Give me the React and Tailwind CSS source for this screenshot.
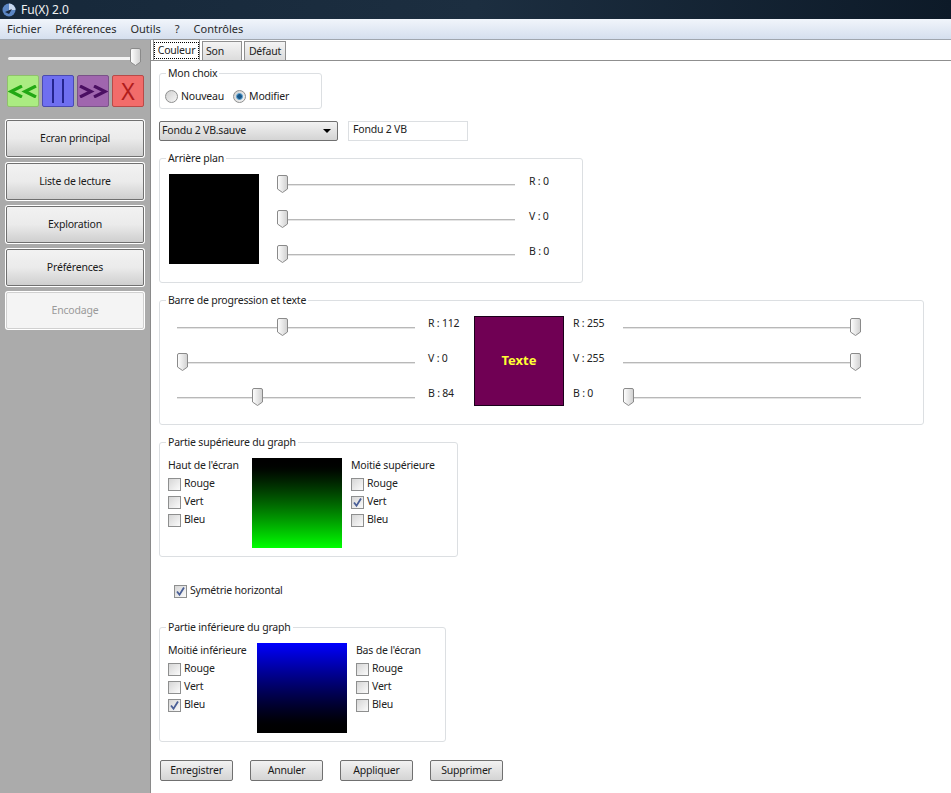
const FONT = 'font-["Noto_Sans","Liberation_Sans",sans-serif]'

function Thumb() {
  return (
    <svg width="11" height="18" viewBox="0 0 11 18" className="block">
      <defs>
        <linearGradient id="thumbFill" x1="0" y1="0" x2="1" y2="0">
          <stop offset="0" stopColor="#ffffff" />
          <stop offset="1" stopColor="#d0d0d0" />
        </linearGradient>
      </defs>
      <path d="M2 .5h7a1.5 1.5 0 0 1 1.5 1.5v12l-5 3.5-5-3.5V2A1.5 1.5 0 0 1 2 .5z" fill="url(#thumbFill)" stroke="#8a8a8a" />
    </svg>
  )
}

function PosSlider({ at }) {
  return (
    <div className="relative flex h-[35px] w-[238px] items-center">
      <div className="h-[2px] w-full border-b border-[#e4e4e4] bg-[#b8b8b8]" />
      <div className="absolute top-[8px]" style={{ left: at }}>
        <Thumb />
      </div>
    </div>
  )
}

function Group({ title, className = '', children }) {
  return (
    <div className={`relative rounded-[3px] border border-[#dcdfe2] ${className}`}>
      <span className="absolute -top-[8px] left-[6px] bg-white px-[2px] leading-[14px]">{title}</span>
      {children}
    </div>
  )
}

function Check({ label, checked }) {
  return (
    <div className="flex h-[18px] items-center gap-[3px]">
      <span className="flex h-[13px] w-[13px] items-center justify-center border border-[#8e8f8f] bg-gradient-to-br from-[#d6d6d6] to-[#fbfbfb]">
        {checked && (
          <svg width="11" height="11" viewBox="0 0 11 11">
            <path d="M2 5.5l2.5 3.2L9 1.5" fill="none" stroke="#4a5f97" strokeWidth="1.8" />
          </svg>
        )}
      </span>
      <span>{label}</span>
    </div>
  )
}

function CheckColumn({ title, checked, className = '' }) {
  return (
    <div className={className}>
      <div className="h-[17px] leading-[15px]">{title}</div>
      {['Rouge', 'Vert', 'Bleu'].map(c => (
        <Check key={c} label={c} checked={checked === c} />
      ))}
    </div>
  )
}

function Radio({ label, on }) {
  return (
    <div className="flex items-center gap-[3px]">
      <span className="flex h-[13px] w-[13px] items-center justify-center rounded-full border border-[#8e8f8f] bg-gradient-to-br from-[#d0d0d0] to-[#f6f6f6]">
        {on && <span className="h-[7px] w-[7px] rounded-full border border-[#5fa8d8] bg-[#1a5688]" />}
      </span>
      <span>{label}</span>
    </div>
  )
}

function NavButton({ label, disabled }) {
  return (
    <button
      className={`h-[39px] w-[140px] rounded-[3px] border-2 border-white outline outline-1 -outline-offset-2 ${
        disabled
          ? 'bg-[#f4f4f4] text-[#9a9a9a] outline-[#d0d0d0]'
          : 'bg-gradient-to-b from-[#f2f2f2] via-[#ebebeb] to-[#cfcfcf] text-[#1a1a1a] outline-[#707070]'
      }`}
    >
      {label}
    </button>
  )
}

function Transport() {
  return (
    <div className="flex h-[32px] gap-[3px]">
      <div className="flex w-[32px] items-center justify-center rounded-[2px] border border-[#8fc06c] bg-[#abec82]">
        <svg width="30" height="13" viewBox="0 0 30 13">
          <path d="M14 1L3 6.5 14 12M28 1L17 6.5 28 12" fill="none" stroke="#22a814" strokeWidth="3.2" />
        </svg>
      </div>
      <div className="flex w-[32px] items-center justify-center gap-[8px] rounded-[2px] border border-[#4a4ab0] bg-[#6f6ff0]">
        <span className="h-[24px] w-[2px] bg-[#25258f]" />
        <span className="h-[24px] w-[2px] bg-[#25258f]" />
      </div>
      <div className="flex w-[32px] items-center justify-center rounded-[2px] border border-[#7a5288] bg-[#a066ae]">
        <svg width="30" height="13" viewBox="0 0 30 13">
          <path d="M2 1l11 5.5L2 12M16 1l11 5.5L16 12" fill="none" stroke="#4b0f62" strokeWidth="3.2" />
        </svg>
      </div>
      <div className="flex w-[32px] items-center justify-center rounded-[2px] border border-[#b84a48] bg-[#f26c6a] text-[23px] leading-none text-[#b01c1c]">
        X
      </div>
    </div>
  )
}

function Swatch({ className = '', children }) {
  return <div className={`h-[90px] w-[90px] shrink-0 ${className}`}>{children}</div>
}

function ActionButton({ label }) {
  return (
    <button className="h-[21px] w-[73px] rounded-[2px] border border-[#707070] bg-gradient-to-b from-[#f2f2f2] to-[#d4d4d4] text-[#1a1a1a]">
      {label}
    </button>
  )
}

export default function App() {
  return (
    <div className={`flex h-[793px] w-[951px] flex-col overflow-hidden bg-white text-[10.5px] tracking-[-0.2px] text-[#222] ${FONT}`}>
      <div className="flex h-[19px] shrink-0 items-center gap-[5px] bg-gradient-to-r from-[#16283a] via-[#1c2e40] to-[#0d1a28] pl-[2px] text-[12px] tracking-normal text-[#f2f2f2]">
        <svg width="14" height="14" viewBox="0 0 14 14">
          <circle cx="7" cy="7" r="6.5" fill="#5b86c4" />
          <path d="M7 .5A6.5 6.5 0 0 1 13.5 7H7z" fill="#c8d8ee" />
          <path d="M3 9l7-3-3 5z" fill="#17263a" />
        </svg>
        <span>Fu(X) 2.0</span>
      </div>

      <div className="flex h-[21px] shrink-0 items-center gap-[14px] border-b border-[#a0a6ae] bg-gradient-to-b from-[#f1f5fb] to-[#d5dfee] pl-[7px] pt-[1px] text-[11px] tracking-normal text-[#2a2a2a]">
        <span>Fichier</span>
        <span>Préférences</span>
        <span>Outils</span>
        <span>?</span>
        <span>Contrôles</span>
      </div>

      <div className="flex flex-1">
        <aside className="flex w-[151px] shrink-0 flex-col border-r border-[#8a8a8a] bg-[#ababab] pl-[5px] pt-[1px]">
          <div className="ml-[3px] w-[133px]">
            <div className="relative flex h-[34px] items-center">
              <div className="h-[3px] w-full rounded-full bg-[#f4f4f4]" />
              <div className="absolute right-0 top-[7px]">
                <Thumb />
              </div>
            </div>
          </div>
          <div className="ml-[2px]">
            <Transport />
          </div>
          <div className="mt-[12px] flex flex-col gap-[4px]">
            <NavButton label="Ecran principal" />
            <NavButton label="Liste de lecture" />
            <NavButton label="Exploration" />
            <NavButton label="Préférences" />
            <NavButton label="Encodage" disabled />
          </div>
        </aside>

        <main className="flex-1">
          <div className="flex h-[21px] items-end gap-[2px] border-b border-[#8f8f8f] pl-[2px]">
            <div className="flex h-[21px] w-[47px] items-center justify-center border border-b-0 border-[#8f8f8f] bg-white">
              <span className="border border-dotted border-black px-[3px] leading-[15px]">Couleur</span>
            </div>
            <div className="flex h-[19px] w-[40px] items-center border border-b-0 border-[#8f8f8f] bg-gradient-to-b from-[#f4f4f4] to-[#dcdcdc] pl-[3px] pt-[2px]">Son</div>
            <div className="flex h-[19px] w-[42px] items-center justify-center border border-b-0 border-[#8f8f8f] bg-gradient-to-b from-[#f4f4f4] to-[#dcdcdc] pt-[2px]">Défaut</div>
          </div>

          <div className="flex flex-col pl-[8px]">
            <Group title="Mon choix" className="mt-[12px] h-[36px] w-[163px]">
              <div className="flex gap-[9px] pl-[5px] pt-[15px]">
                <Radio label="Nouveau" />
                <Radio label="Modifier" on />
              </div>
            </Group>

            <div className="mt-[12px] flex h-[20px] gap-[10px]">
              <div className="flex w-[179px] items-center justify-between rounded-[2px] border border-[#707070] bg-gradient-to-b from-[#f2f2f2] to-[#d4d4d4] pl-[2px] pr-[6px]">
                <span>Fondu 2 VB.sauve</span>
                <span className="h-0 w-0 border-x-[4px] border-t-[4px] border-x-transparent border-t-black" />
              </div>
              <div className="flex w-[120px] items-center border border-[#dcdfe2] pb-[2px] pl-[4px]">Fondu 2 VB</div>
            </div>

            <Group title="Arrière plan" className="mt-[17px] h-[125px] w-[424px]">
              <div className="flex pl-[9px] pt-[8px]">
                <Swatch className="mt-[7px] bg-black" />
                <div className="ml-[18px]">
                  {['R : 0', 'V : 0', 'B : 0'].map(l => (
                    <div key={l} className="flex items-center">
                      <PosSlider at={0} />
                      <span className="mb-[6px] ml-[14px]">{l}</span>
                    </div>
                  ))}
                </div>
              </div>
            </Group>

            <Group title="Barre de progression et texte" className="mt-[17px] h-[125px] w-[765px]">
              <div className="flex pl-[17px] pt-[9px]">
                <div>
                  {[['R : 112', 100], ['V : 0', 0], ['B : 84', 75]].map(([l, at]) => (
                    <div key={l} className="flex items-center">
                      <PosSlider at={at} />
                      <span className="mb-[8px] ml-[13px] w-[46px]">{l}</span>
                    </div>
                  ))}
                </div>
                <Swatch className="mt-[6px] flex items-center justify-center border border-[#1a001a] bg-[#700054] text-[13px] font-bold tracking-normal text-[#ffff33]">
                  Texte
                </Swatch>
                <div className="ml-[9px]">
                  {[['R : 255', 227], ['V : 255', 227], ['B : 0', 0]].map(([l, at]) => (
                    <div key={l} className="flex items-center">
                      <span className="mb-[8px] w-[50px]">{l}</span>
                      <PosSlider at={at} />
                    </div>
                  ))}
                </div>
              </div>
            </Group>

            <Group title="Partie supérieure du graph" className="mt-[17px] h-[115px] w-[299px]">
              <div className="flex pl-[8px] pt-[15px]">
                <CheckColumn title="Haut de l'écran" className="w-[84px]" />
                <Swatch className="bg-gradient-to-b from-black to-[#00ff00]" />
                <CheckColumn title="Moitié supérieure" checked="Vert" className="ml-[9px]" />
              </div>
            </Group>

            <div className="ml-[15px] mt-[25px]">
              <Check label="Symétrie horizontal" checked />
            </div>

            <Group title="Partie inférieure du graph" className="mt-[27px] h-[115px] w-[287px]">
              <div className="flex pl-[8px] pt-[15px]">
                <CheckColumn title="Moitié inférieure" checked="Bleu" className="w-[89px]" />
                <Swatch className="bg-gradient-to-b from-[#0000ff] to-black" />
                <CheckColumn title="Bas de l'écran" className="ml-[9px]" />
              </div>
            </Group>

            <div className="ml-[1px] mt-[18px] flex gap-[17px]">
              <ActionButton label="Enregistrer" />
              <ActionButton label="Annuler" />
              <ActionButton label="Appliquer" />
              <ActionButton label="Supprimer" />
            </div>
          </div>
        </main>
      </div>
    </div>
  )
}
